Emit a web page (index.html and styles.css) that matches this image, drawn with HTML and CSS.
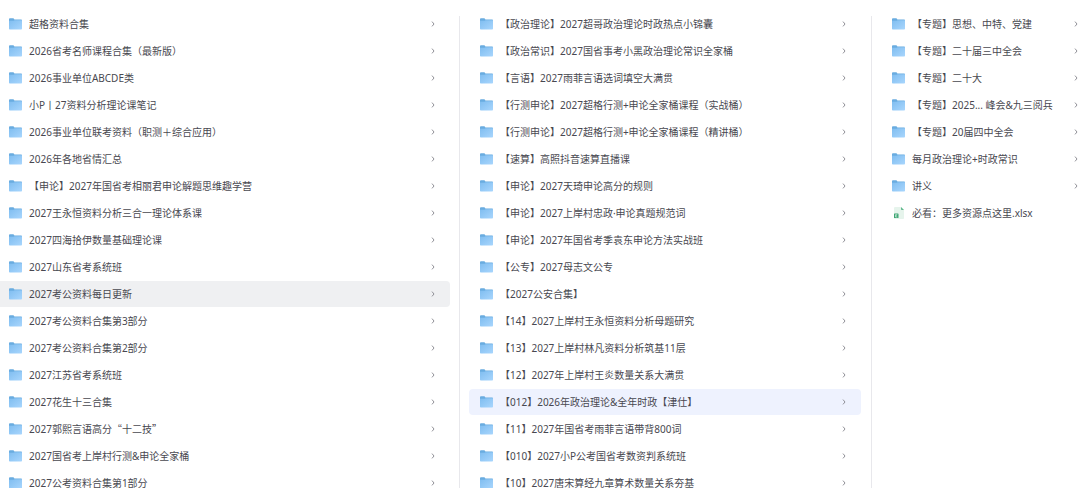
FILE: index.html
```html
<!DOCTYPE html>
<html lang="zh-CN">
<head>
<meta charset="utf-8">
<meta name="viewport" content="width=device-width, initial-scale=1">
<title>资料合集</title>
<link rel="stylesheet" href="styles.css">
</head>
<body>
<svg class="defs" aria-hidden="true">
  <defs>
    <linearGradient id="front" x1="0" y1="0" x2="1" y2="1">
      <stop offset="0" stop-color="#7fbdf0"/>
      <stop offset="1" stop-color="#a9d6fd"/>
    </linearGradient>
    <symbol id="folder" viewBox="0 0 13 12">
      <path d="M0 1.2Q0 .3.9.3H4.2Q4.8.3 5.1.9L5.4 1.4H12.2Q13 1.4 13 2.2V6H0Z" fill="#69ace0"/>
      <path d="M0 2.8H4.6L5.6 2.2H13V10.8Q13 11.6 12.2 11.6H.8Q0 11.6 0 10.8Z" fill="url(#front)"/>
    </symbol>
    <symbol id="sheet" viewBox="0 0 13 12">
      <path d="M3 0H9L12 3V11.2Q12 12 11.2 12H3Q2 12 2 11V1Q2 0 3 0Z" fill="#e6f4ec"/>
      <path d="M9 0L12 3H9.8Q9 3 9 2.2Z" fill="#5fb88c"/>
      <rect x="2" y="6.5" width="4.5" height="4.5" rx=".6" fill="#3ca572"/>
      <path d="M5.3 7.6H3.5V10H5.3M3.5 8.8H5" fill="none" stroke="#e6f4ec" stroke-width=".6"/>
    </symbol>
    <symbol id="chevron" viewBox="0 0 4 6">
      <path d="M1 .6L3 3L1 5.4" fill="none" stroke="#85858c" stroke-width=".9"/>
    </symbol>
  </defs>
</svg>
<main class="browser">
  <ul class="column column-root" id="root"></ul>
  <ul class="column" id="middle"></ul>
  <ul class="column column-last" id="last"></ul>
</main>
<script src="list.js"></script>
</body>
</html>
```
FILE: styles.css
```css
* {
  box-sizing: border-box;
}

body {
  margin: 0;
  background: #fff;
  color: #484850;
  font-family: "Noto Sans", "Noto Sans CJK SC", sans-serif;
  font-size: 10px;
  line-height: 16px;
}

.defs {
  position: absolute;
  width: 0;
  height: 0;
}

.browser {
  display: grid;
  grid-template-columns: 460fr 412fr 208fr;
  height: 100vh;
  padding-top: 16px;
  overflow: hidden;
}

.column {
  display: flex;
  flex-direction: column;
  gap: 1px;
  min-width: 0;
  margin: 0;
  padding: 0 10px 0 9px;
  border-right: 1px solid #e8e8ec;
  list-style: none;
}

.column-root {
  padding: 0 9px 0 0;
}

.column-last {
  padding-right: 0;
  border-right: 0;
}

.row {
  display: flex;
  align-items: center;
  gap: 7px;
  height: 26px;
  padding: 0 15px 0 11px;
  border-radius: 4px;
  color: inherit;
  text-decoration: none;
}

.column li:first-child {
  margin-top: -5px;
}

.column-root .row {
  padding-left: 9px;
  border-radius: 0 4px 4px 0;
}

.column-last .row {
  padding-right: 2px;
}

.row-open {
  background: #eff0f2;
}

.row-active {
  background: #eef2fe;
}

.icon {
  flex: none;
  width: 13px;
  height: 12px;
}

.name {
  flex: 1;
  overflow: hidden;
  white-space: nowrap;
}

.wide {
  font-family: "Noto Sans CJK SC", sans-serif;
}

.chevron {
  flex: none;
  width: 4px;
  height: 6px;
}
```
FILE: list.js
```javascript
const columns = {
  root: [
    "超格资料合集",
    "2026省考名师课程合集（最新版）",
    "2026事业单位ABCDE类",
    "小P丨27资料分析理论课笔记",
    "2026事业单位联考资料（职测＋综合应用）",
    "2026年各地省情汇总",
    "【申论】2027年国省考相丽君申论解题思维趣学营",
    "2027王永恒资料分析三合一理论体系课",
    "2027四海拾伊数量基础理论课",
    "2027山东省考系统班",
    "2027考公资料每日更新",
    "2027考公资料合集第3部分",
    "2027考公资料合集第2部分",
    "2027江苏省考系统班",
    "2027花生十三合集",
    "2027郭熙言语高分<span class=\"wide\">“十二技”</span>",
    "2027国省考上岸村行测&amp;申论全家桶",
    "2027公考资料合集第1部分"
  ],
  middle: [
    "【政治理论】2027超哥政治理论时政热点小锦囊",
    "【政治常识】2027国省事考小黑政治理论常识全家桶",
    "【言语】2027雨菲言语选词填空大满贯",
    "【行测申论】2027超格行测+申论全家桶课程（实战桶）",
    "【行测申论】2027超格行测+申论全家桶课程（精讲桶）",
    "【速算】高照抖音速算直播课",
    "【申论】2027天琦申论高分的规则",
    "【申论】2027上岸村忠政·申论真题规范词",
    "【申论】2027年国省考季袁东申论方法实战班",
    "【公专】2027母志文公专",
    "【2027公安合集】",
    "【14】2027上岸村王永恒资料分析母题研究",
    "【13】2027上岸村林凡资料分析筑基11层",
    "【12】2027年上岸村王炎数量关系大满贯",
    "【012】2026年政治理论&amp;全年时政【津仕】",
    "【11】2027年国省考雨菲言语带背800词",
    "【010】2027小P公考国省考数资判系统班",
    "【10】2027唐宋算经九章算术数量关系夯基"
  ],
  last: [
    "【专题】思想、中特、党建",
    "【专题】二十届三中全会",
    "【专题】二十大",
    "【专题】2025... 峰会&amp;九三阅兵",
    "【专题】20届四中全会",
    "每月政治理论+时政常识",
    "讲义",
    "必看：更多资源点这里.xlsx"
  ]
};

const states = { root: [10, "row-open"], middle: [14, "row-active"] };

for (const [id, names] of Object.entries(columns)) {
  const [index, state] = states[id] || [];
  document.getElementById(id).innerHTML = names.map((name, i) => {
    const file = name.endsWith(".xlsx");
    return `<li><a class="row ${i === index ? state : ""}" href="#">
      <svg class="icon" aria-hidden="true"><use href="#${file ? "sheet" : "folder"}"/></svg>
      <span class="name">${name}</span>
      ${file ? "" : '<svg class="chevron" aria-hidden="true"><use href="#chevron"/></svg>'}
    </a></li>`;
  }).join("");
}
```
